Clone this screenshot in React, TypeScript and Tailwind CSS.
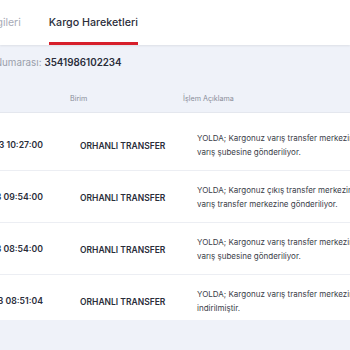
import React from 'react';

interface Movement {
  date: string;
  unit: string;
  desc: string[];
}

const rows: Movement[] = [
  { date: '16.05.2023 10:27:00', unit: 'ORHANLI TRANSFER', desc: ['YOLDA; Kargonuz varış transfer merkezinden', 'varış şubesine gönderiliyor.'] },
  { date: '16.05.2023 09:54:00', unit: 'ORHANLI TRANSFER', desc: ['YOLDA; Kargonuz çıkış transfer merkezinden', 'varış transfer merkezine gönderiliyor.'] },
  { date: '16.05.2023 08:54:00', unit: 'ORHANLI TRANSFER', desc: ['YOLDA; Kargonuz varış transfer merkezinden', 'varış şubesine gönderiliyor.'] },
  { date: '16.05.2023 08:51:04', unit: 'ORHANLI TRANSFER', desc: ['YOLDA; Kargonuz varış transfer merkezine', 'indirilmiştir.'] },
];

const App: React.FC = () => {
  return (
    <div className="w-[350px] h-[350px] overflow-hidden bg-[#eff2f9] font-['Inter',sans-serif] text-[#2a2d3a]">
      <div className="h-[45px] bg-white shadow-[0_1px_2px_rgba(0,0,0,0.08)] flex items-stretch">
        <div className="flex items-center -ml-[58px] mr-[28px] text-[10.5px] text-[#a7abb7]">Gönderi Bilgileri</div>
        <div className="relative flex items-center pt-[1px] text-[10.7px] font-medium text-[#2a2d3a]">
          Kargo Hareketleri
          <span className="absolute left-0 right-0 bottom-0 h-[3px] bg-[#d71f2b]" />
        </div>
      </div>

      <div className="h-[35px] flex items-center pt-[1px] whitespace-nowrap -ml-[45px] text-[9.8px]">
        <span className="text-[#9a9eab]">Gönderi Numarası:</span>
        <span className="ml-[3px] font-semibold text-[#2a2d3a]">3541986102234</span>
      </div>

      <div className="grid grid-cols-[60px_112px_1fr] h-[33px] items-center pt-[7px] border-b border-[#e4e7ee] text-[7.2px] text-[#8a8e9a]">
        <div />
        <div className="pl-[10px]">Birim</div>
        <div className="pl-[11px]">İşlem Açıklama</div>
      </div>

      <div className="bg-white">
        {rows.map((r, i) => (
          <div
            key={i}
            className={`grid grid-cols-[60px_112px_1fr] items-start border-b border-[#eceef3] ${i === 0 ? 'pt-[19px] h-[58px]' : i === 3 ? 'pt-[13px] h-[45px] border-b-0' : 'pt-[13px] h-[52px]'}`}
          >
            <div className="flex justify-end pr-[17px] h-[28px] items-center whitespace-nowrap text-[8.7px] font-semibold">{r.date}</div>
            <div className="pl-[20px] h-[28px] flex items-center whitespace-nowrap text-[8.5px] font-semibold">{r.unit}</div>
            <div className="pl-[25px] whitespace-nowrap text-[8px] leading-[13.5px] text-[#3a3d48] overflow-hidden">
              {r.desc.map((l, j) => (
                <div key={j}>{l}</div>
              ))}
            </div>
          </div>
        ))}
      </div>
    </div>
  );
};

export default App;
